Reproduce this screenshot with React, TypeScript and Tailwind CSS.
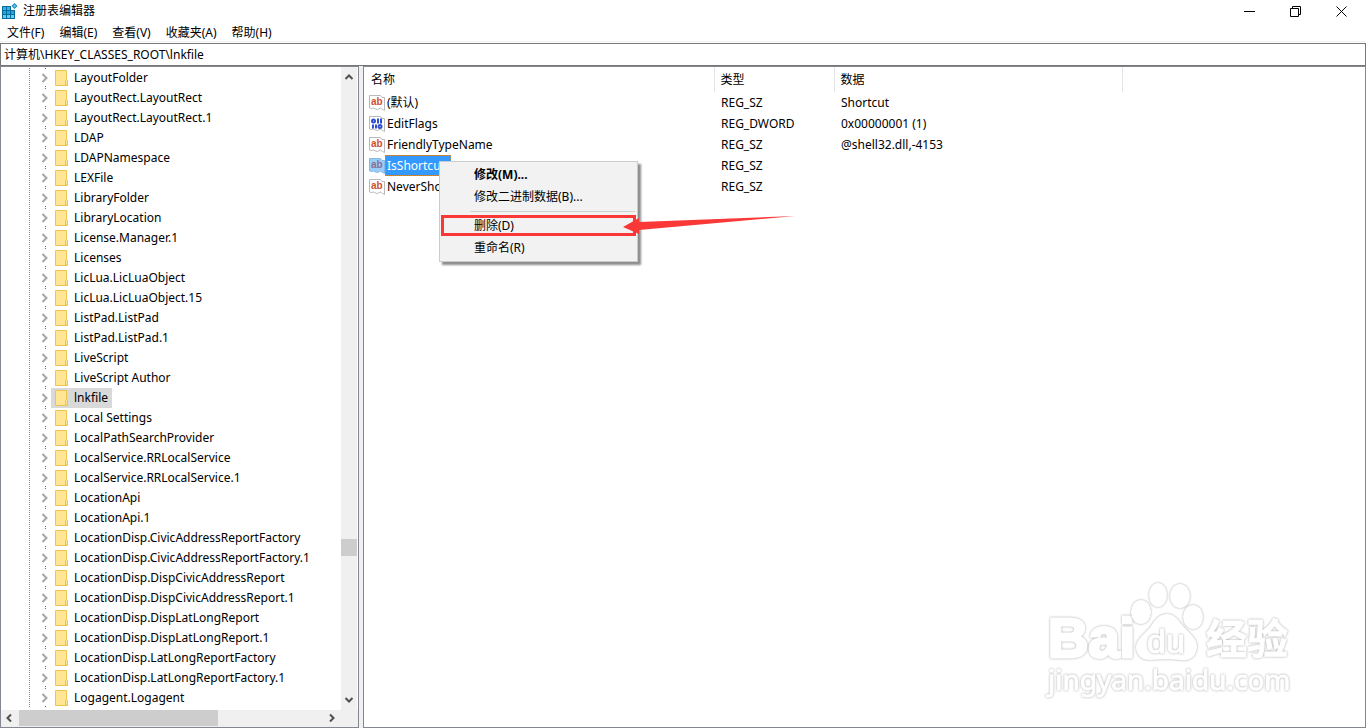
import type { ReactNode } from "react";

const menus = ["文件(F)", "编辑(E)", "查看(V)", "收藏夹(A)", "帮助(H)"];

const keys = [
  "LayoutFolder",
  "LayoutRect.LayoutRect",
  "LayoutRect.LayoutRect.1",
  "LDAP",
  "LDAPNamespace",
  "LEXFile",
  "LibraryFolder",
  "LibraryLocation",
  "License.Manager.1",
  "Licenses",
  "LicLua.LicLuaObject",
  "LicLua.LicLuaObject.15",
  "ListPad.ListPad",
  "ListPad.ListPad.1",
  "LiveScript",
  "LiveScript Author",
  "lnkfile",
  "Local Settings",
  "LocalPathSearchProvider",
  "LocalService.RRLocalService",
  "LocalService.RRLocalService.1",
  "LocationApi",
  "LocationApi.1",
  "LocationDisp.CivicAddressReportFactory",
  "LocationDisp.CivicAddressReportFactory.1",
  "LocationDisp.DispCivicAddressReport",
  "LocationDisp.DispCivicAddressReport.1",
  "LocationDisp.DispLatLongReport",
  "LocationDisp.DispLatLongReport.1",
  "LocationDisp.LatLongReportFactory",
  "LocationDisp.LatLongReportFactory.1",
  "Logagent.Logagent",
];

const values = [
  { name: "(默认)", type: "REG_SZ", data: "Shortcut" },
  { name: "EditFlags", type: "REG_DWORD", data: "0x00000001 (1)" },
  { name: "FriendlyTypeName", type: "REG_SZ", data: "@shell32.dll,-4153" },
  { name: "IsShortcut", type: "REG_SZ", data: "" },
  { name: "NeverShowExt", type: "REG_SZ", data: "" },
];

function AppIcon() {
  return (
    <svg className="h-4 w-4 shrink-0" viewBox="0 0 16 16" aria-hidden="true">
      <path d="M0 3h9v4h4v9H0z" fill="#0b6a9c" />
      <path d="M1 4h3v3H1zM5 4h3v3H5z" fill="#35b5e5" />
      <path d="M1 8h3v3H1zM5 8h3v3H5zM9 8h3v3H9z" fill="#22a5dc" />
      <path d="M1 12h3v3H1zM5 12h3v3H5zM9 12h3v3H9z" fill="#5fd0f2" />
      <path d="M12.5 0l3 3-3 3-3-3z" fill="#1588bd" />
      <path d="M12.5 1.5l1.500 1.500-1.500 1.500-1.500-1.500z" fill="#6ad4f5" />
    </svg>
  );
}

function TreeLines() {
  return (
    <svg className="h-5 w-[50px] shrink-0" viewBox="0 0 50 20" shapeRendering="crispEdges" aria-hidden="true">
      <path d="M28.5 0v20" stroke="#8a8a8a" strokeDasharray="1 1" />
      <path d="M44 0h1v1h-1zM44 18h1v1h-1z" fill="#6a6a6a" />
      <path d="M41.5 6l4 4-4 4" fill="none" stroke="#a6a6a6" strokeWidth="2" shapeRendering="auto" />
    </svg>
  );
}

function Folder() {
  return (
    <svg className="h-4 w-[13px] shrink-0" viewBox="0 0 13 16" aria-hidden="true">
      <path d="M.5.5h11v9l1 1v5H.5z" fill="#ffe694" stroke="#eac54f" />
      <path d="M10.5 15V10.5l1-1 1 1V15z" fill="#ffe694" stroke="#eac54f" />
    </svg>
  );
}

function ValueIcon({ binary, selected }: { binary: boolean; selected: boolean }) {
  return (
    <svg
      className="h-4 w-4 shrink-0 font-['Liberation_Sans',sans-serif] font-bold"
      viewBox="0 0 16 16"
      aria-hidden="true"
    >
      <path
        d="M.5.5h11l1.500 2h2.500v13l-2-1-2-1.500-3 1.500-2-.5-2-1-2 .5-2-.5z"
        fill={selected ? "#99ccf7" : "#fff"}
        stroke={selected ? "#85b9e6" : "#b9b9b9"}
      />
      {binary ? (
        <g fill="none" stroke="#2f4fd0" strokeWidth="2">
          <ellipse cx="4.5" cy="5" rx="1.500" ry="1.500" />
          <path d="M9 2.500v5M12 2.500v5M4 8.500v4M7 8.500v4" />
          <ellipse cx="11" cy="10.500" rx="1.500" ry="1.500" />
        </g>
      ) : (
        <text x="2" y="10" fontSize="10" fill={selected ? "#8a6f93" : "#d4502c"}>
          ab
        </text>
      )}
    </svg>
  );
}

function ScrollArrow({ d, label }: { d: string; label: string }) {
  return (
    <button type="button" aria-label={label} className="flex h-4 w-4 shrink-0 items-center justify-center">
      <svg width="10" height="10" viewBox="0 0 10 10" fill="none" stroke="#505050" strokeWidth="2">
        <path d={d} />
      </svg>
    </button>
  );
}

function CaptionButton({ label, children }: { label: string; children: ReactNode }) {
  return (
    <button type="button" aria-label={label} className="flex h-5 w-[46px] items-center justify-center">
      <svg width="11" height="11" viewBox="0 0 11 11" fill="none" stroke="#000">
        {children}
      </svg>
    </button>
  );
}

function MenuItem({ children, bold = false }: { children: string; bold?: boolean }) {
  return (
    <button
      type="button"
      role="menuitem"
      className={`block h-[22px] w-full pl-[33px] text-left ${bold ? "font-bold" : ""}`}
    >
      {children}
    </button>
  );
}

function ContextMenu() {
  return (
    <div
      role="menu"
      className="absolute left-[439px] top-[161px] w-[199px] border border-[#ccc] bg-[#f2f2f2] px-px py-0.5 shadow-[3px_3px_2px_rgba(0,0,0,0.45)]"
    >
      <MenuItem bold>修改(M)...</MenuItem>
      <MenuItem>修改二进制数据(B)...</MenuItem>
      <div className="my-[3px] ml-[29px] mr-px h-px bg-[#d0d0d0]" />
      <div className="mb-px h-[21px] outline-3 -outline-offset-3 outline-[#fb3838]">
        <MenuItem>删除(D)</MenuItem>
      </div>
      <MenuItem>重命名(R)</MenuItem>
      <svg className="absolute left-[183px] top-[53px] h-[20px] w-[174px]" viewBox="0 0 174 20" aria-hidden="true">
        <path d="M0 12L16 3v4L172 1 16 15v4z" fill="#fb3838" />
      </svg>
    </div>
  );
}

function Watermark() {
  return (
    <svg
      className="pointer-events-none absolute bottom-5 right-16 h-[130px] w-[260px] fill-white *:drop-shadow-[0_0_1px_#a6a6a6]"
      viewBox="0 0 260 130"
      aria-hidden="true"
    >
      <text
        x="6"
        y="79"
        fontSize="56"
        stroke="#fff"
        strokeWidth="3"
        className="font-['Liberation_Sans',sans-serif] font-bold"
      >
        Bai
      </text>
      <ellipse cx="99" cy="34" rx="10" ry="12" />
      <ellipse cx="116" cy="17" rx="9" ry="12" />
      <ellipse cx="138" cy="18" rx="10" ry="12" />
      <ellipse cx="151" cy="39" rx="10" ry="12" />
      <path d="M125 36c-8 0-12 6-16 12s-15 13-15 21 6 14 16 13c8-1 21-1 28 0 11 2 17-5 17-14 0-8-9-14-14-20s-8-12-16-12z" />
      <text
        x="105"
        y="75"
        fontSize="34"
        stroke="#fff"
        className="font-['Liberation_Sans',sans-serif]"
      >
        du
      </text>
      <text
        x="164"
        y="76"
        fontSize="41"
        stroke="#fff"
        className="font-['Noto_Sans_CJK_SC',sans-serif] font-bold"
      >
        经验
      </text>
      <text x="6" y="112" fontSize="28" stroke="#fff" className="font-['Noto_Sans',sans-serif]">
        jingyan.baidu.com
      </text>
    </svg>
  );
}

function KeyTree() {
  return (
    <aside className="flex w-[359px] shrink-0 flex-col border border-[#828790]">
      <div className="flex min-h-0 flex-1">
        <ul role="tree" className="min-w-0 flex-1 overflow-hidden pt-px">
          {keys.map((key) => (
            <li key={key} role="treeitem" aria-selected={key === "lnkfile"} className="flex h-5">
              <TreeLines />
              <span className={`flex items-center pl-1 pr-1 ${key === "lnkfile" ? "bg-[#d9d9d9]" : ""}`}>
                <Folder />
                <span className="pl-1.5 whitespace-nowrap">{key}</span>
              </span>
            </li>
          ))}
        </ul>
        <div className="mr-px flex w-4 shrink-0 flex-col bg-[#f0f0f0] py-0.5">
          <ScrollArrow label="Up" d="M1.5 7L5 3.5 8.5 7" />
          <div className="grow-[454]" />
          <div className="h-[17px] bg-[#cdcdcd]" />
          <div className="grow-[136]" />
          <ScrollArrow label="Down" d="M1.5 3L5 6.5 8.5 3" />
        </div>
      </div>
      <div className="flex h-[17px] shrink-0 bg-[#f0f0f0] pr-[18px] pb-px">
        <ScrollArrow label="Left" d="M7 1.5L3.5 5 7 8.5" />
        <div className="ml-0.5 w-[199px] bg-[#cdcdcd]" />
        <div className="flex-1" />
        <ScrollArrow label="Right" d="M3 1.5L6.5 5 3 8.5" />
      </div>
    </aside>
  );
}

function ValueList() {
  return (
    <section className="min-w-0 flex-1 border border-[#828790]">
      <table className="w-[759px] table-fixed border-collapse text-left">
        <thead>
          <tr className="h-[25px]">
            <th className="w-[350px] border-r border-[#e5e5e5] pl-[7px] font-normal">名称</th>
            <th className="w-[120px] border-r border-[#e5e5e5] pl-1.5 font-normal">类型</th>
            <th className="border-r border-[#e5e5e5] pl-1.5 font-normal">数据</th>
          </tr>
        </thead>
        <tbody>
          {values.map((v) => {
            const selected = v.name === "IsShortcut";
            return (
              <tr key={v.name} className="h-[21px]">
                <td className="p-0 pl-[5px]">
                  <div className="flex h-[21px] items-center">
                    <ValueIcon binary={v.type === "REG_DWORD"} selected={selected} />
                    <span
                      className={
                        selected
                          ? "h-[21px] border border-dotted border-[#d08a3c] bg-[#3399ff] px-px pr-[5px] leading-[19px] text-white"
                          : "px-0.5"
                      }
                    >
                      {v.name}
                    </span>
                  </div>
                </td>
                <td className="p-0 pl-[7px]">{v.type}</td>
                <td className="p-0 pl-[7px]">{v.data}</td>
              </tr>
            );
          })}
        </tbody>
      </table>
    </section>
  );
}

export default function App() {
  return (
    <div className="relative flex h-screen flex-col overflow-hidden bg-white font-['Noto_Sans','Noto_Sans_CJK_SC',sans-serif] text-xs text-black">
      <header className="flex h-[22px] shrink-0 items-center pl-0.5 pr-0.5">
        <AppIcon />
        <h1 className="flex-1 pl-[5px]">注册表编辑器</h1>
        <CaptionButton label="Minimize">
          <path d="M0 5.5h11" />
        </CaptionButton>
        <CaptionButton label="Restore">
          <path d="M.5 2.5h8v8h-8zM2.5 2.5v-2h8v8h-2" />
        </CaptionButton>
        <CaptionButton label="Close">
          <path d="M.5.5l10 10M10.5.5l-10 10" />
        </CaptionButton>
      </header>
      <nav className="flex h-5 shrink-0 items-center gap-[15px] border-b border-[#f0f0f0] pl-[7px] pt-0.5">
        {menus.map((m) => (
          <button key={m} type="button">
            {m}
          </button>
        ))}
      </nav>
      <input
        aria-label="Address"
        defaultValue="计算机\HKEY_CLASSES_ROOT\lnkfile"
        className="mt-px h-[23px] shrink-0 border border-[#777] pb-0.5 pl-[3px] outline-none"
      />
      <main className="flex min-h-0 flex-1 gap-1 bg-[#f0f0f0] *:bg-white">
        <KeyTree />
        <ValueList />
      </main>
      <ContextMenu />
      <Watermark />
    </div>
  );
}
